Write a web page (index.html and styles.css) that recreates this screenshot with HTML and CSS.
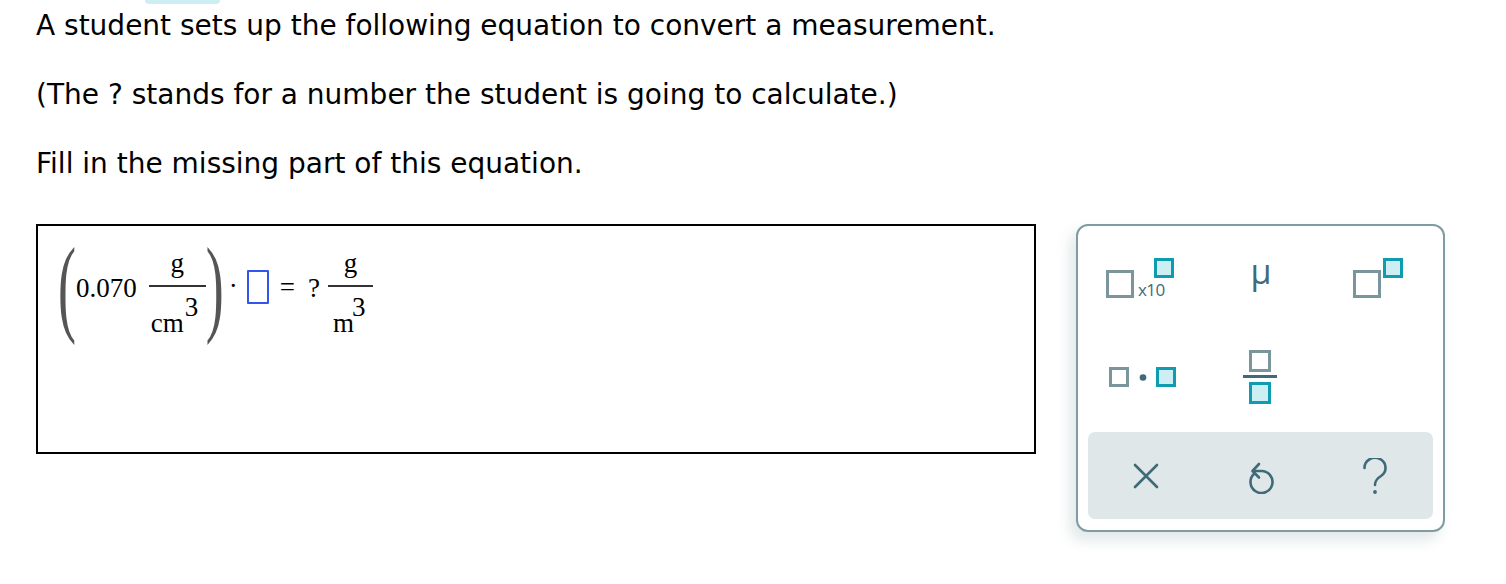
FILE: index.html
```html
<!DOCTYPE html>
<html>
<head>
<meta charset="utf-8">
<link rel="stylesheet" href="styles.css">
</head>
<body>
<div class="tab"></div>
<div class="question">
  <p class="line">A student sets up the following equation to convert a measurement.</p>
  <p class="line">(The ? stands for a number the student is going to calculate.)</p>
  <p class="line">Fill in the missing part of this equation.</p>
</div>
<div class="work">
  <div class="answer">
    <div class="eq">
      <span class="paren lp">(</span>
      <span class="num">0.070</span>
      <span class="frac f1">
        <span class="top">g</span>
        <span class="bar"></span>
        <span class="bot"><span class="unit">cm</span><span class="exp">3</span></span>
      </span>
      <span class="paren rp">)</span>
      <span class="dot">·</span>
      <span class="blank"></span>
      <span class="eqs">=</span>
      <span class="q">?</span>
      <span class="frac f2">
        <span class="top">g</span>
        <span class="bar"></span>
        <span class="bot"><span class="unit">m</span><span class="exp">3</span></span>
      </span>
    </div>
  </div>
  <div class="panel">
    <div class="grid">
      <div class="cell c1">
        <svg width="72" height="44" viewBox="0 0 72 44">
          <rect x="1.5" y="13.5" width="25" height="25" fill="none" stroke="#7a959c" stroke-width="3"/>
          <rect x="49.5" y="1.5" width="17" height="17" fill="#cdeef3" stroke="#0f9bb0" stroke-width="3"/>
        </svg>
        <span class="x10">x10</span>
      </div>
      <div class="cell c2"><span class="mu">μ</span></div>
      <div class="cell c3">
        <svg width="52" height="42" viewBox="0 0 52 42">
          <rect x="1.5" y="13.5" width="25" height="25" fill="none" stroke="#7a959c" stroke-width="3"/>
          <rect x="31.5" y="1.5" width="17" height="17" fill="#cdeef3" stroke="#0f9bb0" stroke-width="3"/>
        </svg>
      </div>
      <div class="cell c4">
        <svg width="68" height="22" viewBox="0 0 68 22">
          <rect x="1.5" y="1.5" width="17" height="17" fill="none" stroke="#7a959c" stroke-width="3"/>
          <circle cx="34" cy="10.5" r="3.3" fill="#3f6a78"/>
          <rect x="48.5" y="1.5" width="17" height="17" fill="#cdeef3" stroke="#0f9bb0" stroke-width="3"/>
        </svg>
      </div>
      <div class="cell c5">
        <svg width="36" height="56" viewBox="0 0 36 56">
          <rect x="7.5" y="1.5" width="19" height="19" fill="none" stroke="#7a959c" stroke-width="3"/>
          <rect x="0" y="25" width="34" height="3" fill="#3f6a78"/>
          <rect x="7.5" y="33.5" width="19" height="19" fill="#cdeef3" stroke="#0f9bb0" stroke-width="3"/>
        </svg>
      </div>
      <div class="cell c6"></div>
    </div>
    <div class="tools">
      <div class="tool">
        <svg width="28" height="28" viewBox="0 0 28 28">
          <path d="M3 3 L25 25 M25 3 L3 25" stroke="#3f6a78" stroke-width="2.6" stroke-linecap="round" fill="none"/>
        </svg>
      </div>
      <div class="tool">
        <svg width="30" height="36" viewBox="0 0 30 36">
          <path d="M8.5 15.5 A11 11 0 1 0 15 13 L7 13" stroke="#3f6a78" stroke-width="2.6" stroke-linecap="round" fill="none"/>
          <path d="M13 6 L6.5 13 L13 19.5" stroke="#3f6a78" stroke-width="2.6" stroke-linecap="round" stroke-linejoin="round" fill="none"/>
        </svg>
      </div>
      <div class="tool t3">
        <svg width="28" height="38" viewBox="0 0 28 38">
          <path d="M2.5 10 A10.5 10 0 1 1 19 18 Q13 21.5 13 27" stroke="#3f6a78" stroke-width="2.6" stroke-linecap="round" fill="none"/>
          <circle cx="13" cy="34" r="1.9" fill="#3f6a78"/>
        </svg>
      </div>
    </div>
  </div>
</div>
</body>
</html>
```
FILE: styles.css
```css
html, body {
  margin: 0;
  padding: 0;
  background: #fff;
}
body {
  font-family: "DejaVu Sans", Verdana, sans-serif;
  color: #000;
  width: 1506px;
  height: 584px;
  overflow: hidden;
}
.tab {
  margin-left: 145px;
  width: 75px;
  height: 4px;
  background: #cdeef3;
  border-radius: 0 0 8px 8px;
}
.question {
  padding-left: 36px;
  padding-top: 5px;
}
.line {
  margin: 0 0 35px 0;
  font-size: 28px;
  line-height: 34px;
}
.line:last-child { margin-bottom: 0; }
.work {
  display: flex;
  align-items: flex-start;
  margin-left: 36px;
  margin-top: 43px;
  gap: 40px;
}
.answer {
  width: 996px;
  height: 226px;
  border: 2px solid #000;
  font-family: "Liberation Serif", "Times New Roman", serif;
}
.eq {
  display: flex;
  align-items: flex-start;
  font-size: 27px;
  line-height: 27px;
}
.paren {
  display: block;
  width: 16px;
  text-align: center;
  font-size: 54px;
  line-height: 54px;
  color: #555;
  transform: scaleY(1.98);
  margin-top: 33px;
}
.lp { margin-left: 20px; }
.num { margin-left: 2px; margin-top: 49px; }
.frac {
  display: flex;
  flex-direction: column;
  margin-top: 24px;
}
.frac .top { text-align: center; }
.frac .bar { height: 2px; background: #333; margin-top: 8px; }
.frac .bot {
  display: flex;
  align-items: flex-start;
  margin-top: 7px;
}
.unit { margin-top: 16px; }
.f1 { margin-left: 12px; }
.f1 .bar { width: 57px; }
.f1 .bot { padding-left: 2px; }
.f1 .exp { margin-left: 1px; }
.rp { margin-left: 0; }
.dot { margin-left: 7px; margin-top: 47px; }
.blank {
  width: 18px;
  height: 30px;
  border: 2px solid #3355ee;
  border-radius: 1px;
  margin-left: 9px;
  margin-top: 44px;
}
.eqs { margin-left: 11px; margin-top: 48px; }
.q { margin-left: 13px; margin-top: 49px; }
.f2 { margin-left: 8px; }
.f2 .bar { width: 45px; }
.f2 .bot { padding-left: 5px; }
.f2 .exp { margin-left: -2px; }
.panel {
  width: 365px;
  height: 304px;
  border: 2px solid #7f9ba3;
  border-radius: 12px;
  box-shadow: -6px 8px 14px rgba(90, 120, 130, 0.18);
  background: #fff;
  display: flex;
  flex-direction: column;
}
.grid {
  display: grid;
  grid-template-columns: 118px 118px 118px;
  grid-template-rows: 100px 100px;
  padding: 30px 0 0 6px;
  height: 176px;
}
.cell {
  display: flex;
  justify-content: center;
  align-items: flex-start;
  position: relative;
}
.c1 svg { margin-left: -2px; margin-top: 2px; }
.c3 svg { margin-top: 2px; }
.c4 { padding-top: 111px; margin-top: -100px; }
.c5 { padding-top: 94px; margin-top: -100px; }
.x10 {
  position: absolute;
  left: 54px;
  top: 24px;
  font-family: "Open Sans", sans-serif;
  font-size: 17px;
  line-height: 20px;
  color: #3f6a78;
  letter-spacing: -0.6px;
}
.mu {
  font-family: "Open Sans", sans-serif;
  font-weight: 400;
  font-size: 34px;
  line-height: 40px;
  color: #3f6a78;
  margin-top: -5px;
}
.tools {
  margin: 0 10px 0 10px;
  height: 87px;
  background: #dfe7e9;
  border-radius: 7px;
  display: grid;
  grid-template-columns: 1fr 1fr 1fr;
  align-items: center;
}
.tool {
  display: flex;
  justify-content: center;
  align-items: center;
}
.t3 { padding-top: 2px; }
```
